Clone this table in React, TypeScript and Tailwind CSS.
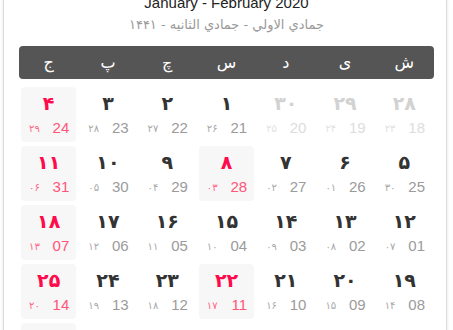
const WEEK = ["ش", "ی", "د", "س", "چ", "پ", "ج"];

type Day = { fa: string; greg: string; hijri: string; other?: boolean; red?: boolean };

const toFa = (s: string) => s.replace(/[0-9]/g, (d) => "۰۱۲۳۴۵۶۷۸۹"[Number(d)]);

const row = (fa: number[], greg: string[], hijri: string[], other: number[] = [], red: number[] = []): Day[] =>
  fa.map((n, i) => ({
    fa: toFa(String(n)),
    greg: greg[i],
    hijri: toFa(hijri[i]),
    other: other.includes(i),
    red: red.includes(i) || i === 6,
  }));

const ROWS: Day[][] = [
  row([28, 29, 30, 1, 2, 3, 4], ["18", "19", "20", "21", "22", "23", "24"], ["23", "24", "25", "26", "27", "28", "29"], [0, 1, 2]),
  row([5, 6, 7, 8, 9, 10, 11], ["25", "26", "27", "28", "29", "30", "31"], ["30", "01", "02", "03", "04", "05", "06"], [], [3]),
  row([12, 13, 14, 15, 16, 17, 18], ["01", "02", "03", "04", "05", "06", "07"], ["07", "08", "09", "10", "11", "12", "13"]),
  row([19, 20, 21, 22, 23, 24, 25], ["08", "09", "10", "11", "12", "13", "14"], ["14", "15", "16", "17", "18", "19", "20"], [], [3]),
  row([26, 27, 28, 29, 30, 1, 2], ["15", "16", "17", "18", "19", "20", "21"], ["21", "22", "23", "24", "25", "26", "27"], [5, 6]),
];

const DayCell = ({ day }: { day: Day }) => {
  const big = day.other ? "text-[#d2d2d2]" : day.red ? "text-[#ff0a4b]" : "text-[#333333]";
  const greg = day.other ? "text-[#dddddd]" : day.red ? "text-[#ff5577]" : "text-[#9b9b9b]";
  const hij = day.other ? "text-[#e2e2e2]" : day.red ? "text-[#ff6688]" : "text-[#a8a8a8]";
  return (
    <div className={`h-[55px] rounded-[4px] flex flex-col items-center pt-[3px] ${day.red ? "bg-[#f7f7f7]" : ""}`}>
      <span className={`font-['DejaVu_Sans',sans-serif] font-bold text-[19px] leading-[26px] ${big}`}>{day.fa}</span>
      <div dir="ltr" className="w-full flex items-center justify-between pl-[8px] pr-[7px] mt-[4px] h-[16px]">
        <span className={`font-['DejaVu_Sans',sans-serif] text-[10px] ${hij}`}>{day.hijri}</span>
        <span className={`font-['Liberation_Sans_Narrow','Liberation_Sans',sans-serif] text-[15px] leading-[16px] ${greg}`}>{day.greg}</span>
      </div>
    </div>
  );
};

export default function App() {
  return (
    <div className="w-[453px] h-[330px] overflow-hidden bg-white">
      <div className="ml-[3px] w-[444px] h-[340px] overflow-hidden border-x border-[#dcdcdc] bg-white shadow-[0_0_3px_rgba(0,0,0,0.12)] pl-[15px] pr-[12px]">
        <div className="-mt-[8px] text-center font-['Liberation_Sans',sans-serif] text-[15px] leading-[22px] text-[#222222]">
          January - February 2020
        </div>
        <div dir="rtl" className="mt-[1px] text-center font-['DejaVu_Sans',sans-serif] text-[13px] leading-[20px] text-[#9a9a9a]">
          جمادي الاولي - جمادي الثانيه - ۱۴۴۱
        </div>
        <div dir="rtl" className="mt-[11px] h-[33px] rounded-[4px] bg-[#555555] grid grid-cols-7 gap-x-[4px] px-[2px] items-center">
          {WEEK.map((w) => (
            <span key={w} className="text-center text-white font-['DejaVu_Sans',sans-serif] text-[16px] leading-[20px]">
              {w}
            </span>
          ))}
        </div>
        <div dir="rtl" className="mt-[8px] grid grid-cols-7 gap-[4px] px-[2px]">
          {ROWS.flat().map((d, i) => (
            <DayCell key={i} day={d} />
          ))}
        </div>
      </div>
    </div>
  );
}
